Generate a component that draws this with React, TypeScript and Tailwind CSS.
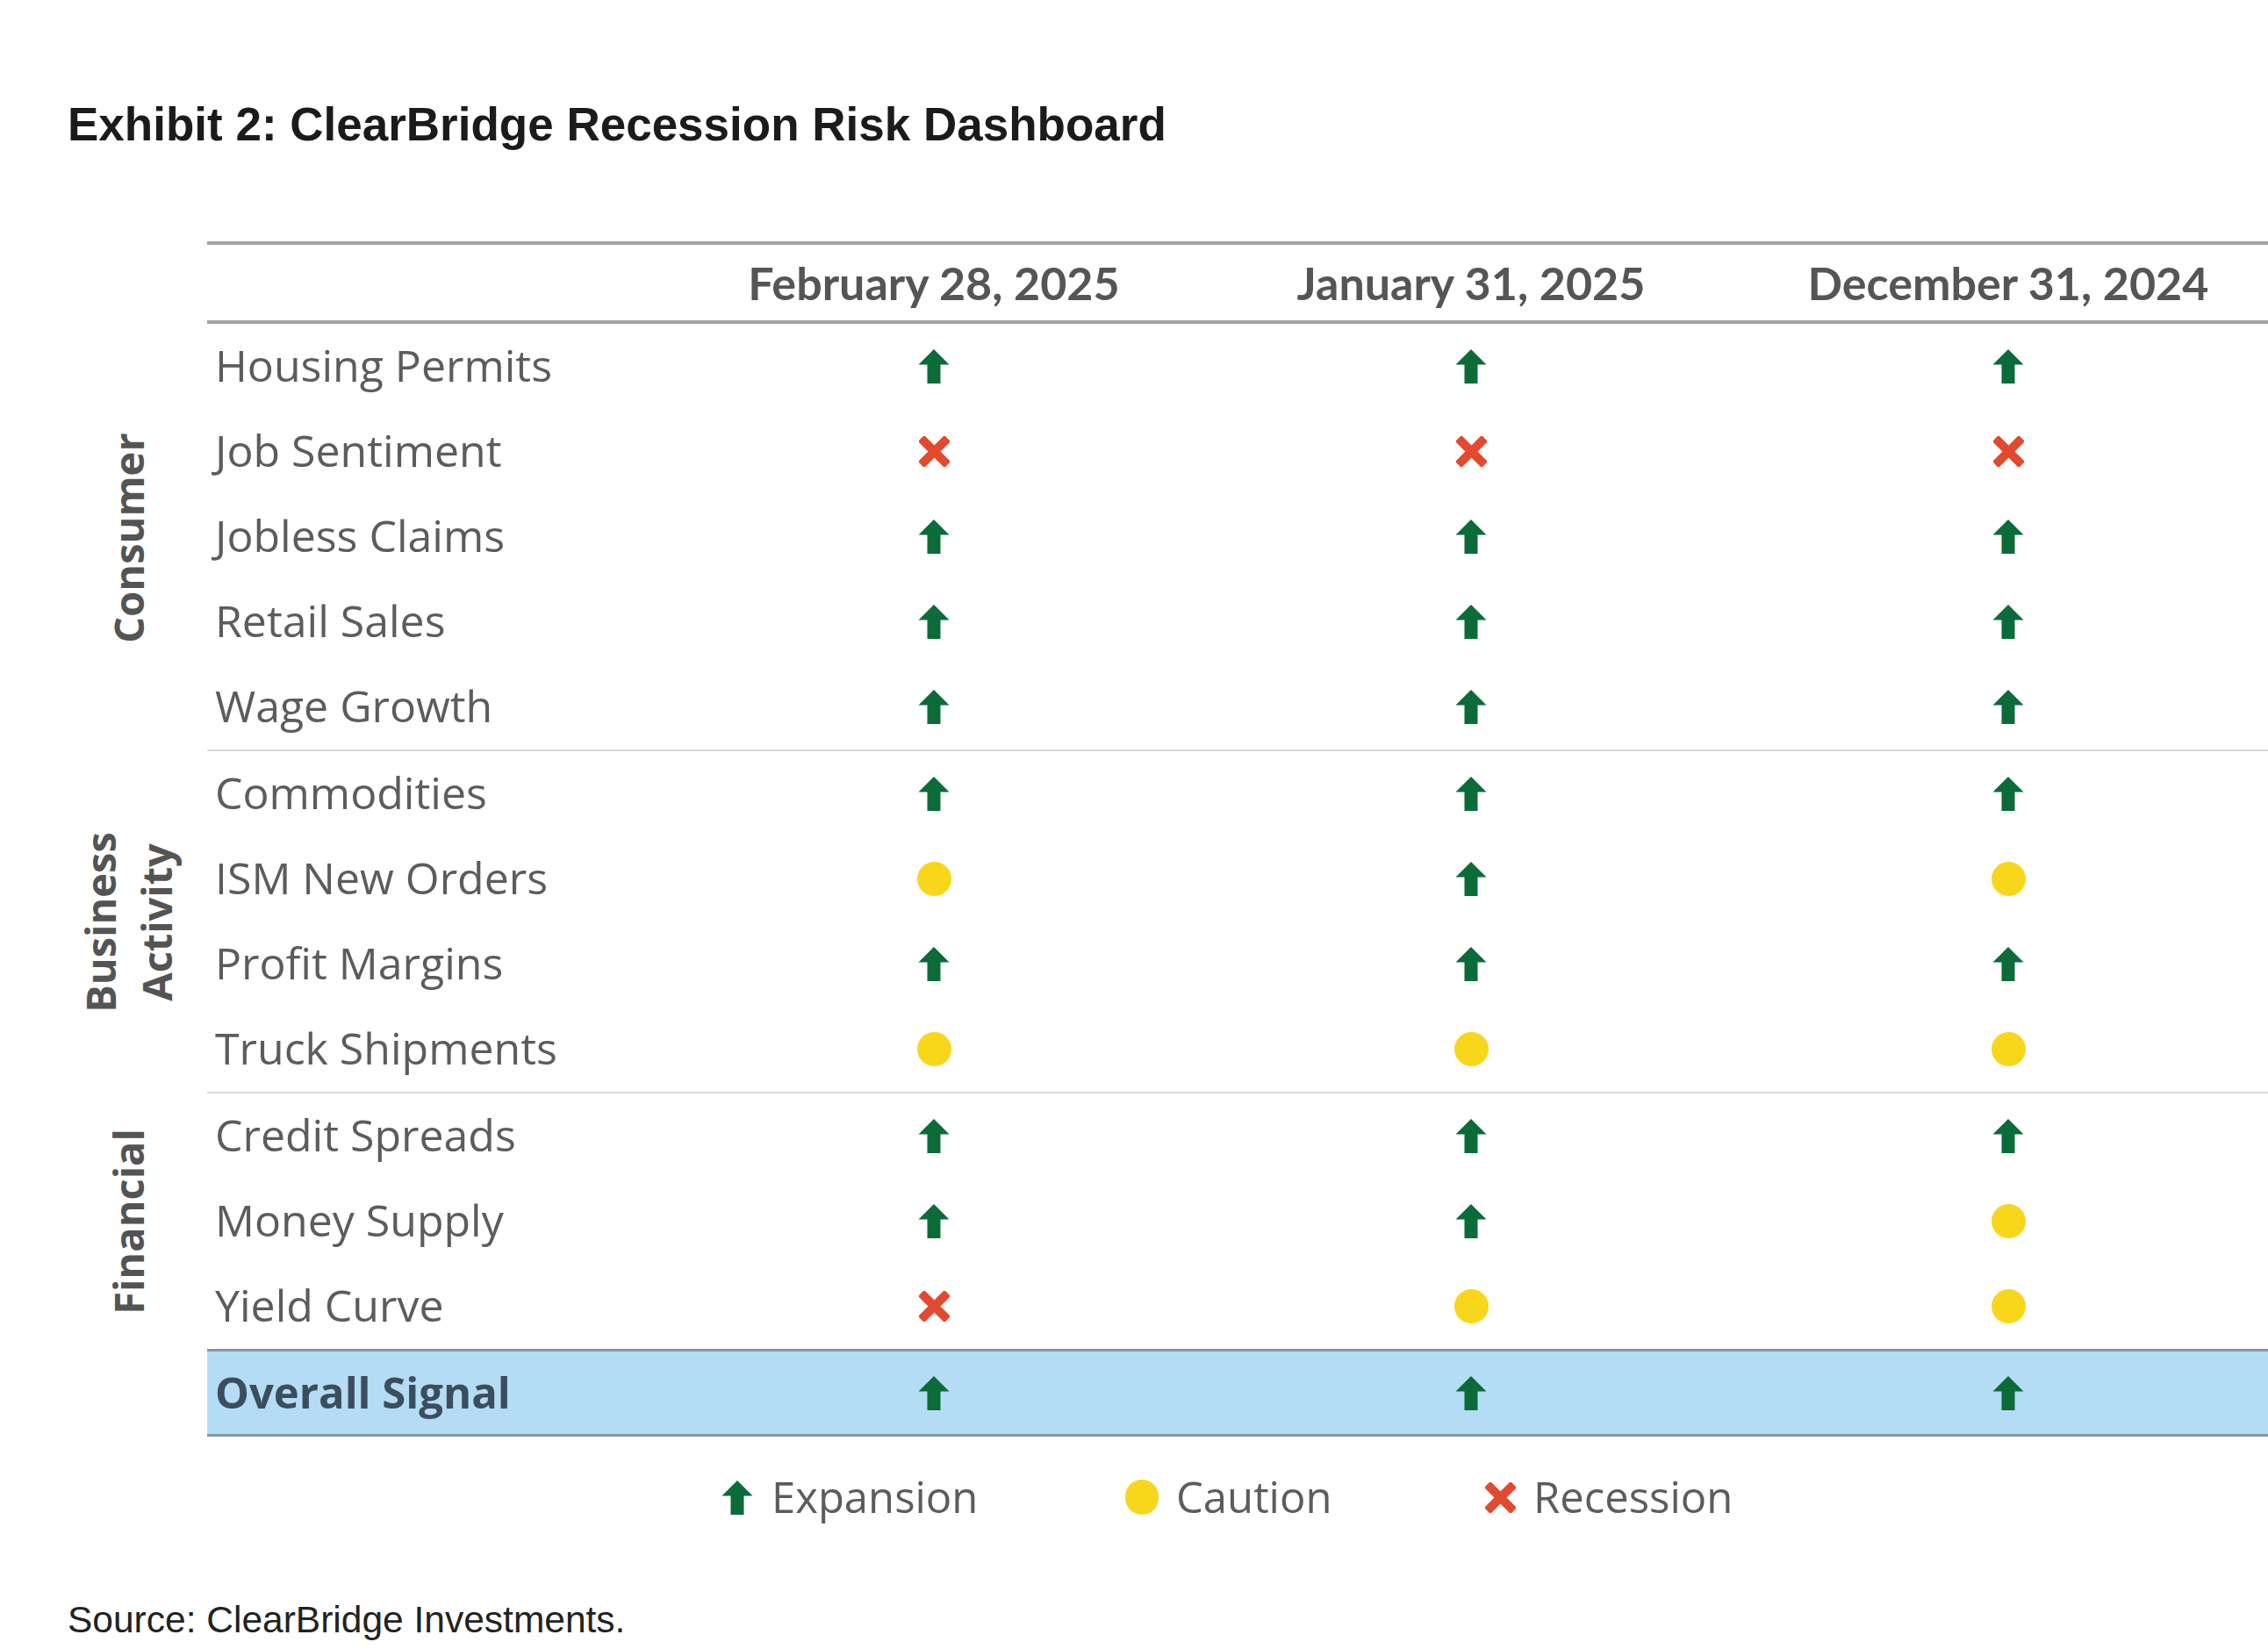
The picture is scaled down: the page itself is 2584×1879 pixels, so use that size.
import React from 'react'

type Signal = 'up' | 'caution' | 'down'

const dates = ['February 28, 2025', 'January 31, 2025', 'December 31, 2024']

const groups: { name: string[]; rows: { label: string; signals: Signal[] }[] }[] = [
  {
    name: ['Consumer'],
    rows: [
      { label: 'Housing Permits', signals: ['up', 'up', 'up'] },
      { label: 'Job Sentiment', signals: ['down', 'down', 'down'] },
      { label: 'Jobless Claims', signals: ['up', 'up', 'up'] },
      { label: 'Retail Sales', signals: ['up', 'up', 'up'] },
      { label: 'Wage Growth', signals: ['up', 'up', 'up'] }
    ]
  },
  {
    name: ['Business', 'Activity'],
    rows: [
      { label: 'Commodities', signals: ['up', 'up', 'up'] },
      { label: 'ISM New Orders', signals: ['caution', 'up', 'caution'] },
      { label: 'Profit Margins', signals: ['up', 'up', 'up'] },
      { label: 'Truck Shipments', signals: ['caution', 'caution', 'caution'] }
    ]
  },
  {
    name: ['Financial'],
    rows: [
      { label: 'Credit Spreads', signals: ['up', 'up', 'up'] },
      { label: 'Money Supply', signals: ['up', 'up', 'caution'] },
      { label: 'Yield Curve', signals: ['down', 'caution', 'caution'] }
    ]
  }
]

const UpArrow = () => (
  <svg width="36" height="39" viewBox="0 0 36 39">
    <path d="M18 0 L35.5 17.5 L25.5 17.5 L25.5 39 L10.5 39 L10.5 17.5 L0.5 17.5 Z" fill="#0b6b39" />
  </svg>
)

const Cross = () => (
  <svg width="35" height="35" viewBox="0 0 35 35">
    <path d="M6 6 L29 29 M29 6 L6 29" stroke="#e2492e" strokeWidth="10" strokeLinecap="square" />
  </svg>
)

const Dot = () => <div className="h-[39px] w-[39px] rounded-full bg-[#f8d61c]" />

const SignalIcon: React.FC<{ s: Signal }> = ({ s }) => {
  if (s === 'up') return <UpArrow />
  if (s === 'down') return <Cross />
  return <Dot />
}

const App: React.FC = () => {
  return (
    <div className="h-[1879px] w-[2584px] overflow-hidden bg-white">
      <div className="pl-[77px] pt-[110px]">
        <h1 className="text-[53px] font-bold leading-[64px] text-[#1b1b1b] [font-family:'Liberation_Sans',Arial,sans-serif]">
          Exhibit 2: ClearBridge Recession Risk Dashboard
        </h1>

        {/* Dashboard table */}
        <div className="mt-[101px] [font-family:'Open_Sans',sans-serif]">
          <div className="flex">
            <div className="w-[159px] shrink-0" />
            <div className="grid h-[94px] w-[2358px] shrink-0 grid-cols-[522px_612px_612px_612px] border-y-[4px] border-[#a2a2a2]">
              <div />
              {dates.map((d) => (
                <div
                  key={d}
                  className="flex items-center justify-center text-[52px] font-bold text-[#555] [font-family:Lato,sans-serif]"
                >
                  {d}
                </div>
              ))}
            </div>
          </div>

          {groups.map((g, gi) => (
            <div key={gi} className="flex">
              <div className="flex w-[159px] shrink-0 items-center justify-center pr-[22px]">
                <div className="flex -rotate-90 flex-col items-center whitespace-nowrap text-[47px] font-bold leading-[64px] text-[#545454]">
                  {g.name.map((n) => (
                    <span key={n}>{n}</span>
                  ))}
                </div>
              </div>
              <div className={`w-[2358px] shrink-0 ${gi < groups.length - 1 ? 'border-b-2 border-[#d8d8d8]' : ''}`}>
                {g.rows.map((r) => (
                  <div key={r.label} className="grid h-[97px] grid-cols-[522px_612px_612px_612px] items-center">
                    <div className="pb-[3px] pl-[9px] text-[50px] text-[#5c5c5c]">{r.label}</div>
                    {r.signals.map((s, i) => (
                      <div key={i} className="flex justify-center">
                        <SignalIcon s={s} />
                      </div>
                    ))}
                  </div>
                ))}
              </div>
            </div>
          ))}

          <div className="flex">
            <div className="w-[159px] shrink-0" />
            <div className="grid h-[100px] w-[2358px] shrink-0 grid-cols-[522px_612px_612px_612px] items-center border-y-[3px] border-[#8797a3] bg-[#b4ddf5]">
              <div className="pl-[9px] text-[49px] font-bold text-[#3c4d5c]">Overall Signal</div>
              {(['up', 'up', 'up'] as Signal[]).map((s, i) => (
                <div key={i} className="flex justify-center">
                  <SignalIcon s={s} />
                </div>
              ))}
            </div>
          </div>

          {/* Legend */}
          <div className="mt-[39px] flex h-[60px] items-center pl-[745px] text-[49px] text-[#5c5c5c]">
            <div className="flex w-[460px] items-center gap-[21px]">
              <UpArrow />
              <span>Expansion</span>
            </div>
            <div className="flex w-[410px] items-center gap-[20px]">
              <div className="h-[40px] w-[38px] rounded-full bg-[#f8d61c]" />
              <span>Caution</span>
            </div>
            <div className="flex items-center gap-[20px]">
              <Cross />
              <span>Recession</span>
            </div>
          </div>
        </div>

        <p className="mt-[85px] text-[42.5px] leading-[50px] text-[#222] [font-family:'Liberation_Sans',Arial,sans-serif]">
          Source: ClearBridge Investments.
        </p>
      </div>
    </div>
  )
}

export default App
